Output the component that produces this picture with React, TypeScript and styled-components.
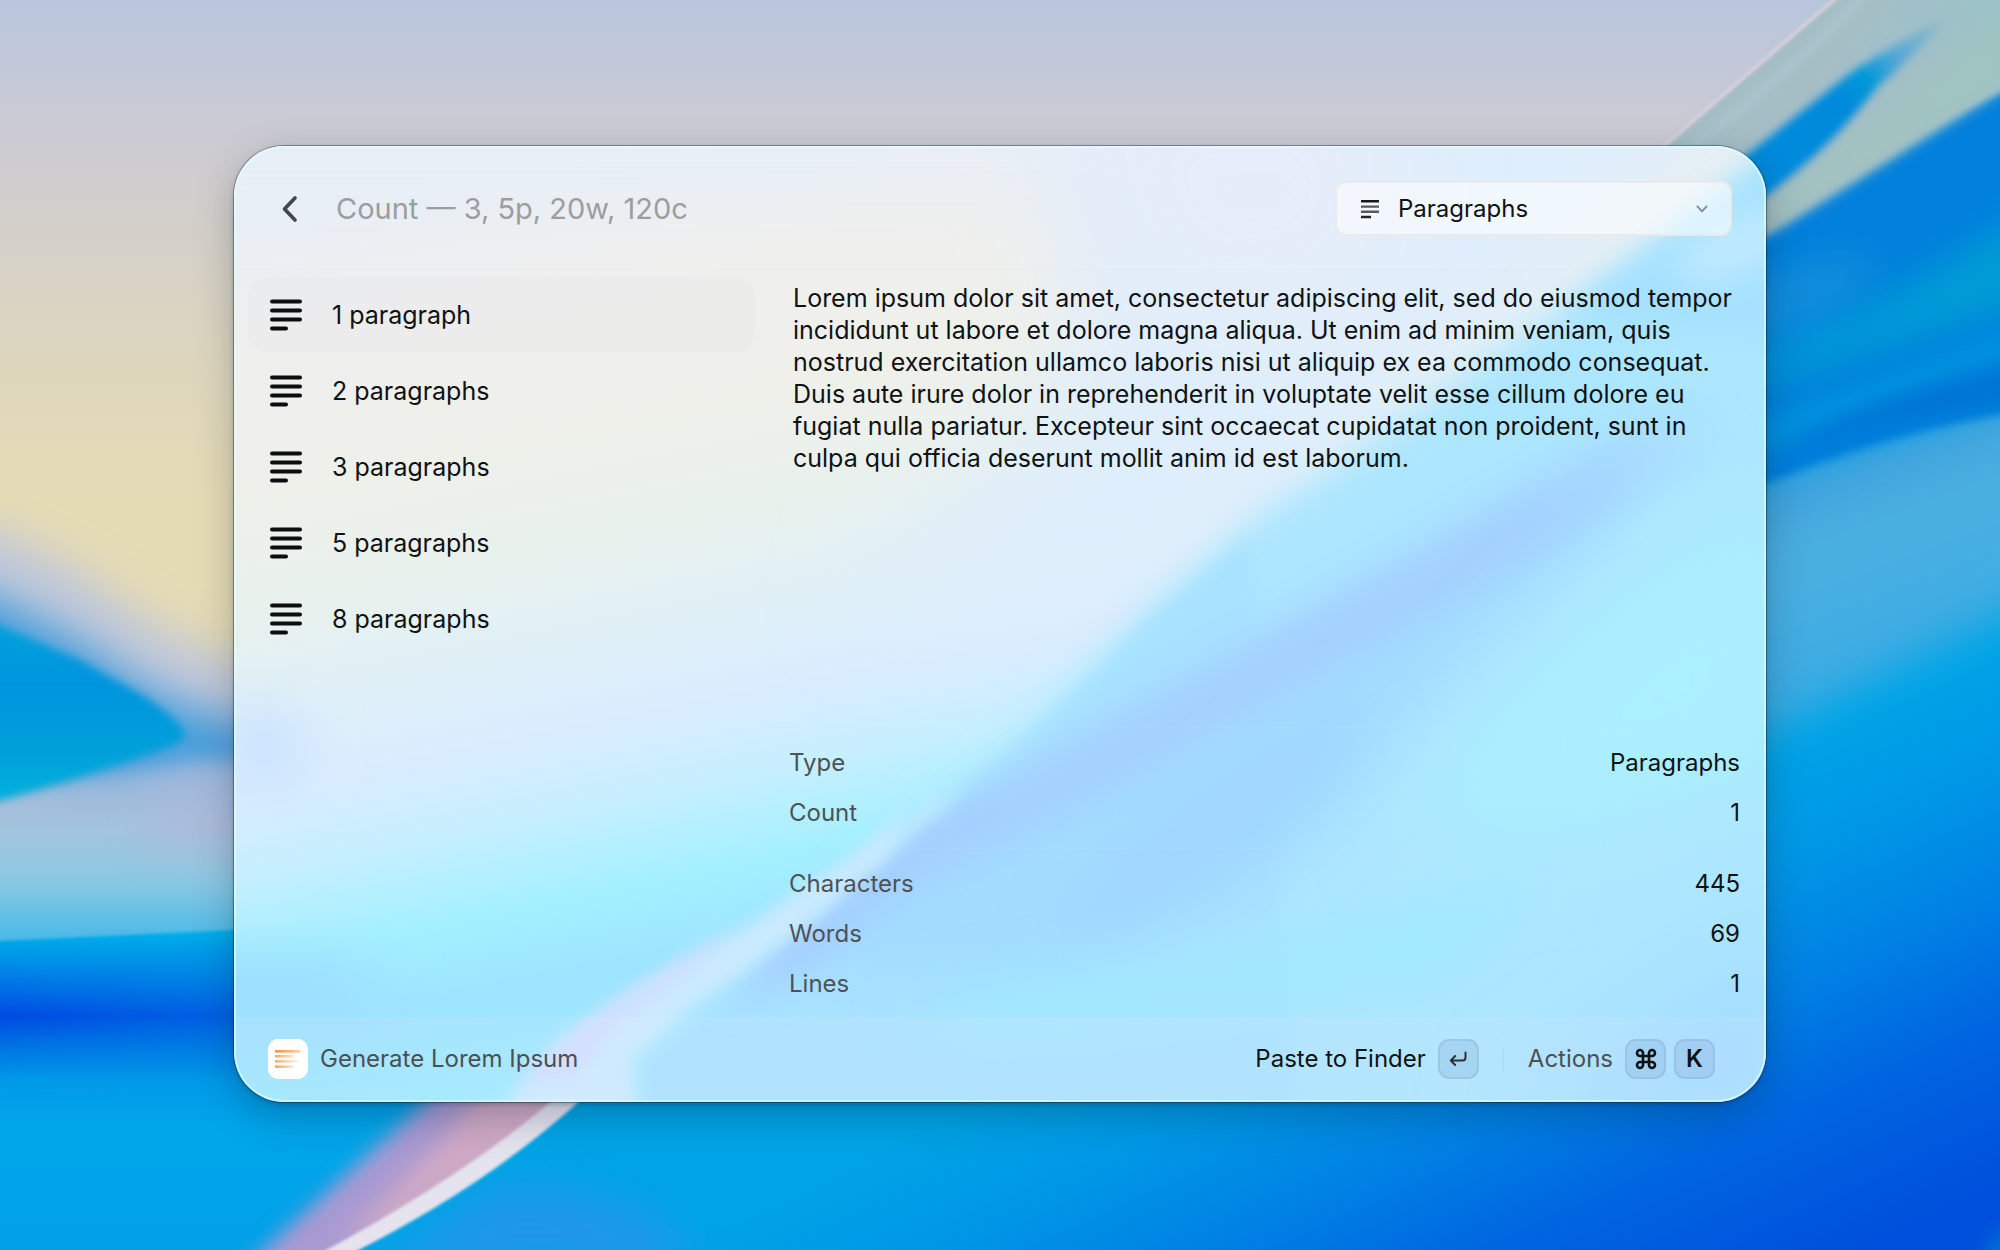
import React, { useState } from "react";
import styled, { createGlobalStyle } from "styled-components";
import { Command } from "lucide-react";

const GlobalStyle = createGlobalStyle`
  *, *::before, *::after { box-sizing: border-box; }
  html, body { margin: 0; padding: 0; }
  body {
    font-family: Inter, "Noto Sans", sans-serif;
    color: #101214;
    -webkit-font-smoothing: antialiased;
  }
  button, input, select { font: inherit; color: inherit; margin: 0; }
  ul, dl, dd, p { margin: 0; padding: 0; }
  ul { list-style: none; }
`;

const Desktop = styled.div`
  position: relative;
  isolation: isolate;
  overflow: hidden;
  display: flex;
  min-height: 100vh;
  padding: clamp(24px, 12vh, 146px) clamp(24px, 12vw, 234px) clamp(24px, 12vh, 148px);
  background: #0090e4;
`;

const Backdrop = styled.svg`
  position: absolute;
  inset: 0;
  z-index: -1;
  width: 100%;
  height: 100%;
`;

const Window = styled.main`
  position: relative;
  isolation: isolate;
  overflow: hidden;
  flex: 1;
  min-width: 0;
  display: flex;
  flex-direction: column;
  border-radius: 50px;
`;

const WindowShadow = styled.div`
  flex: 1;
  min-width: 0;
  display: flex;
  border-radius: 50px;
  box-shadow: 0 0 0 1px rgba(0, 20, 40, 0.34), 0 2px 5px rgba(0, 20, 40, 0.25),
    0 14px 40px rgba(0, 20, 40, 0.26);
`;

const Rim = styled.div`
  position: absolute;
  inset: 0;
  pointer-events: none;
  border-radius: 50px;
  box-shadow: inset 0 0 0 2px rgba(225, 255, 255, 0.62);
`;

const Header = styled.header`
  display: flex;
  align-items: center;
  height: 124px;
  padding: 2px 34px 0 36px;
  border-bottom: 1px solid rgba(120, 140, 160, 0.03);
`;

const BackButton = styled.button`
  display: grid;
  place-items: center;
  width: 40px;
  height: 48px;
  padding: 0;
  border: 0;
  background: none;
  color: #444648;
`;

const SearchInput = styled.input`
  flex: 1;
  min-width: 0;
  height: 48px;
  margin-left: 26px;
  padding: 0;
  border: 0;
  outline: 0;
  background: none;
  font-size: 29px;
  &::placeholder {
    color: #9c9d9f;
    opacity: 1;
  }
`;

const KindPicker = styled.label`
  display: grid;
  grid-template-columns: 24px 20px 1fr 12px 22px;
  align-items: center;
  width: 397px;
  height: 55px;
  border: 2px solid rgba(236, 230, 230, 0.85);
  border-radius: 11px;
  background: rgba(255, 255, 255, 0.56);
  & > svg {
    grid-row: 1;
    pointer-events: none;
  }
  & > svg:first-child { grid-column: 2; }
  & > svg:last-child { grid-column: 4; }
`;

const KindSelect = styled.select`
  grid-row: 1;
  grid-column: 1 / -1;
  height: 51px;
  padding: 0 48px 0 61px;
  border: 0;
  outline: 0;
  appearance: none;
  background: transparent;
  font-size: 24px;
`;

const Body = styled.div`
  flex: 1;
  display: grid;
  grid-template-columns: 532fr 1000fr;
  min-height: 0;
`;

const ResultList = styled.ul`
  padding: 7px 11px 7px 14px;
`;

const ResultRow = styled.button<{ $selected: boolean }>`
  display: flex;
  align-items: center;
  gap: 30px;
  width: 100%;
  height: 76px;
  padding: 0 22px;
  border: 0;
  border-radius: 20px;
  text-align: left;
  font-size: 25px;
  background: ${(p) => (p.$selected ? "rgba(120, 100, 130, 0.02)" : "transparent")};
`;

const Detail = styled.section`
  display: flex;
  flex-direction: column;
  justify-content: space-between;
  min-width: 0;
`;

const Preview = styled.p`
  padding: 12px 18px 0 27px;
  font-size: 25px;
  line-height: 32px;
`;

const Facts = styled.div`
  padding: 10px 26px 8px 23px;
  border-top: 1px solid rgba(200, 225, 255, 0.14);
`;

const FactGroup = styled.dl`
  & + & {
    margin-top: 10px;
    padding-top: 10px;
    border-top: 1px solid rgba(200, 220, 255, 0.2);
  }
`;

const Fact = styled.div`
  display: flex;
  justify-content: space-between;
  font-size: 24px;
  line-height: 50px;
  dt { color: #4d5257; }
`;

const Footer = styled.footer`
  display: flex;
  align-items: center;
  justify-content: space-between;
  height: 85px;
  padding: 0 51px 2px 34px;
  background: rgba(255, 240, 255, 0.1);
  font-size: 24px;
`;

const Source = styled.div`
  display: flex;
  align-items: center;
  gap: 12px;
  color: #4c4f54;
`;

const SourceIcon = styled.span`
  display: grid;
  place-items: center;
  width: 40px;
  height: 40px;
  border-radius: 10px;
  background: #fff;
`;

const Actions = styled.div`
  display: flex;
  align-items: center;
`;

const Action = styled.button<{ $muted?: boolean }>`
  display: flex;
  align-items: center;
  gap: 8px;
  padding: 0;
  border: 0;
  background: none;
  color: ${(p) => (p.$muted ? "#4c4f54" : "#101214")};
`;

const ActionName = styled.span`
  margin-right: 4px;
`;

const Divider = styled.span`
  width: 1px;
  height: 24px;
  margin: 0 24px;
  background: rgba(90, 150, 210, 0.12);
`;

const KeyCap = styled.kbd`
  display: grid;
  place-items: center;
  width: 41px;
  height: 40px;
  border: 2px solid rgba(90, 130, 170, 0.16);
  border-radius: 11px;
  background: rgba(110, 145, 190, 0.2);
  color: #101214;
  font-family: inherit;
  font-size: 24px;
  font-weight: 600;
`;

const LinesIcon = () => (
  <svg width="32" height="32" viewBox="0 0 32 32" fill="none" stroke="#0c0d0f" strokeWidth="4" strokeLinecap="round" aria-hidden>
    <path d="M2 2.5h28M2 11.5h28M2 20.5h28M2 29.5h14" />
  </svg>
);

const SmallLinesIcon = () => (
  <svg width="18" height="20" viewBox="0 0 18 20" fill="none" strokeWidth="2.4" aria-hidden>
    <path d="M0 2.2h18" stroke="#15171a" />
    <path d="M0 7.6h18M0 12.8h18" stroke="#56595e" />
    <path d="M0 18h10" stroke="#222428" />
  </svg>
);

const AppGlyph = () => (
  <svg width="26" height="20" viewBox="0 0 26 20" aria-hidden>
    <defs>
      <linearGradient id="amber" x1="0" x2="26" y1="0" y2="0" gradientUnits="userSpaceOnUse">
        <stop offset="0" stopColor="#f89433" />
        <stop offset="1" stopColor="#fdd2a4" />
      </linearGradient>
      <linearGradient id="amberFade" x1="0" x2="26" y1="0" y2="0" gradientUnits="userSpaceOnUse">
        <stop offset="0" stopColor="#f9a557" />
        <stop offset="1" stopColor="#ffffff" />
      </linearGradient>
    </defs>
    <g>
      <rect x="0" y="1" width="25" height="2.6" fill="url(#amber)" />
      <rect x="0" y="6" width="19" height="2.4" fill="url(#amberFade)" />
      <rect x="0" y="11.2" width="25" height="2.4" fill="url(#amberFade)" />
      <rect x="0" y="16.4" width="18" height="2.6" fill="url(#amberFade)" />
    </g>
  </svg>
);

const Wallpaper = () => (
  <Backdrop viewBox="0 0 2000 1250" preserveAspectRatio="none" aria-hidden>
    <defs>
      <linearGradient id="sky" x1="0" y1="0" x2="0" y2="620" gradientUnits="userSpaceOnUse">
        <stop offset="0" stopColor="#b9c6dc" />
        <stop offset="0.15" stopColor="#c6c9d7" />
        <stop offset="0.26" stopColor="#cecccf" />
        <stop offset="0.4" stopColor="#d5d1c8" />
        <stop offset="0.6" stopColor="#dfd7bd" />
        <stop offset="0.8" stopColor="#e5dbb5" />
        <stop offset="1" stopColor="#e5dbb5" />
      </linearGradient>
      <linearGradient id="mist" x1="0" y1="760" x2="0" y2="945" gradientUnits="userSpaceOnUse">
        <stop offset="0" stopColor="#8fb0dc" />
        <stop offset="0.35" stopColor="#a6c3dc" />
        <stop offset="0.65" stopColor="#8cc8e2" />
        <stop offset="1" stopColor="#42b8e8" />
      </linearGradient>
      <linearGradient id="sea" x1="0" y1="930" x2="0" y2="1250" gradientUnits="userSpaceOnUse">
        <stop offset="0" stopColor="#00b0ea" />
        <stop offset="0.09" stopColor="#0094e8" />
        <stop offset="0.27" stopColor="#004ae2" />
        <stop offset="0.36" stopColor="#0070e4" />
        <stop offset="0.47" stopColor="#009ae8" />
        <stop offset="0.62" stopColor="#00a6ea" />
        <stop offset="1" stopColor="#00a0e8" />
      </linearGradient>
      <linearGradient id="seaFade" x1="0" y1="0" x2="420" y2="0" gradientUnits="userSpaceOnUse">
        <stop offset="0" stopColor="#0092e4" stopOpacity="0" />
        <stop offset="1" stopColor="#0092e4" stopOpacity="0.6" />
      </linearGradient>
      <linearGradient id="fin" x1="0" y1="620" x2="0" y2="805" gradientUnits="userSpaceOnUse">
        <stop offset="0" stopColor="#00a2da" />
        <stop offset="0.35" stopColor="#0094de" />
        <stop offset="0.7" stopColor="#00a0da" />
        <stop offset="1" stopColor="#00b2dc" />
      </linearGradient>
      <linearGradient id="deep" x1="1767" y1="747" x2="1974" y2="1207" gradientUnits="userSpaceOnUse">
        <stop offset="0" stopColor="#00a4e6" />
        <stop offset="0.21" stopColor="#0098e6" />
        <stop offset="0.46" stopColor="#0080e4" />
        <stop offset="0.68" stopColor="#0066e0" />
        <stop offset="1" stopColor="#004edc" />
      </linearGradient>
      <linearGradient id="haze" x1="1840" y1="440" x2="1930" y2="680" gradientUnits="userSpaceOnUse">
        <stop offset="0" stopColor="#3a9bdc" />
        <stop offset="0.35" stopColor="#4cb0e0" />
        <stop offset="1" stopColor="#38aae4" />
      </linearGradient>
      <linearGradient id="veil" x1="2000" y1="0" x2="1700" y2="220" gradientUnits="userSpaceOnUse">
        <stop offset="0" stopColor="#9cc2c8" />
        <stop offset="0.5" stopColor="#a5bec8" />
        <stop offset="1" stopColor="#a3b8c2" />
      </linearGradient>
      <linearGradient id="wedge" x1="1950" y1="20" x2="1850" y2="110" gradientUnits="userSpaceOnUse">
        <stop offset="0" stopColor="#6cb0cf" stopOpacity="0.2" />
        <stop offset="0.5" stopColor="#4fa6d6" />
        <stop offset="0.75" stopColor="#0098d8" />
        <stop offset="1" stopColor="#008adc" />
      </linearGradient>
      <filter id="b1" x="-20%" y="-20%" width="140%" height="140%"><feGaussianBlur stdDeviation="1.4" /></filter>
      <filter id="b4" x="-20%" y="-20%" width="140%" height="140%"><feGaussianBlur stdDeviation="4" /></filter>
      <filter id="b10" x="-30%" y="-30%" width="160%" height="160%"><feGaussianBlur stdDeviation="10" /></filter>
      <filter id="b22" x="-40%" y="-40%" width="180%" height="180%"><feGaussianBlur stdDeviation="20" /></filter>
    </defs>

    <rect width="2000" height="1250" fill="url(#sky)" />

    <path d="M-80 505 L0 530 L75 568 L150 622 L260 672 L420 750 V960 H-80Z" fill="#c1c8da" filter="url(#b22)" />
    <path d="M-80 566 L0 598 L75 638 L150 688 L230 722 L420 740 V790 H-80Z" fill="#479fdc" filter="url(#b22)" />
    <path d="M-60 812 Q110 784 190 762 L420 758 V970 H-60Z" fill="url(#mist)" filter="url(#b10)" />
    <path d="M150 790 L300 770 V850 L150 850Z" fill="#adb9da" opacity="0.7" filter="url(#b22)" />
    <path d="M-20 618 L80 660 L117 681 Q165 706 184 731 Q188 741 165 748 Q90 776 -20 806Z" fill="url(#fin)" filter="url(#b4)" />

    <path d="M-20 942 L700 908 V1270 H-20Z" fill="url(#sea)" filter="url(#b1)" />
    <rect y="950" width="700" height="130" fill="url(#seaFade)" filter="url(#b10)" />

    <path d="M566 1095 Q470 1182 335 1260 H2040 V240 H1700Z" fill="url(#deep)" />
    <path d="M220 1290 L450 1080 L620 1080 L360 1285Z" fill="#a99ad2" filter="url(#b10)" />
    <path d="M340 1240 Q430 1160 490 1080 L640 1080 L460 1215Z" fill="#cfa9c6" filter="url(#b10)" />
    <path d="M572 1100 Q478 1186 338 1260 H700 V1100Z" fill="url(#deep)" />
    <path d="M500 1185 Q420 1235 370 1270 H700 Q660 1185 500 1185Z" fill="#2b93ea" opacity="0.75" filter="url(#b22)" />
    <path d="M583 1098 Q480 1192 330 1264 L300 1264 Q460 1180 555 1098Z" fill="#e4e3ee" filter="url(#b1)" />

    <path d="M1680 500 L2060 380 V588 L1680 775Z" fill="url(#haze)" filter="url(#b22)" />
    <ellipse cx="2010" cy="1262" rx="26" ry="34" fill="#0078d4" opacity="0.8" filter="url(#b10)" />
    <path d="M1700 230 L2040 70 V408 Q1880 430 1700 512Z" fill="#007fdc" filter="url(#b4)" />
    <path d="M1700 370 Q1860 330 2060 190 V290 Q1900 350 1700 400Z" fill="#009dd6" filter="url(#b22)" />
    <path d="M1740 290 Q1840 240 1880 260 Q1860 310 1740 340Z" fill="#239ada" opacity="0.6" filter="url(#b22)" />
    <path d="M1700 440 L2040 318 V346 L1700 476Z" fill="#0092de" filter="url(#b10)" />
    <path d="M1800 440 Q1900 385 2060 362 V394 Q1900 412 1800 450Z" fill="#0074d4" filter="url(#b10)" />

    <path d="M1842 -6 L1660 152 L1720 280 L1766 236 L2020 78 V-6Z" fill="url(#veil)" filter="url(#b4)" />
    <path d="M1842 -6 L1664 150 L1740 170 L1900 -6Z" fill="#a5bec6" filter="url(#b1)" />
    <path d="M1837 -3 L1661 148" stroke="#d6d0da" strokeWidth="4" fill="none" filter="url(#b1)" />
    <path d="M1862 -2 Q1770 90 1690 148" stroke="#b0c8d2" strokeWidth="5" fill="none" filter="url(#b4)" />
    <path d="M2010 10 L1860 130 L1766 205 L1766 232 L2010 82Z" fill="#a0c6bf" opacity="0.75" filter="url(#b10)" />
    <path d="M1950 16 Q1900 40 1852 72 L1740 160 L1755 204 Q1830 150 1878 86 Q1915 56 1950 16Z" fill="url(#wedge)" filter="url(#b4)" />
  </Backdrop>
);

const Glass = () => (
  <Backdrop viewBox="234 146 1532 956" preserveAspectRatio="none" aria-hidden>
    <defs>
      <linearGradient id="pane" x1="600" y1="146" x2="784" y2="1065" gradientUnits="userSpaceOnUse">
        <stop offset="0" stopColor="#e9eff6" />
        <stop offset="0.12" stopColor="#efefef" />
        <stop offset="0.29" stopColor="#eff0ea" />
        <stop offset="0.42" stopColor="#e8f1ed" />
        <stop offset="0.53" stopColor="#dff0f9" />
        <stop offset="0.6" stopColor="#daecfe" />
        <stop offset="0.69" stopColor="#c6efff" />
        <stop offset="0.78" stopColor="#a4f0ff" />
        <stop offset="0.87" stopColor="#9de4ff" />
        <stop offset="1" stopColor="#9eecff" />
      </linearGradient>
      <linearGradient id="ribbon" x1="1720" y1="400" x2="1500" y2="520" gradientUnits="userSpaceOnUse">
        <stop offset="0" stopColor="#a4d0ff" stopOpacity="0" />
        <stop offset="1" stopColor="#a4d0ff" />
      </linearGradient>
      <filter id="g8" filterUnits="userSpaceOnUse" x="0" y="0" width="2000" height="1250"><feGaussianBlur stdDeviation="8" /></filter>
      <filter id="g16" filterUnits="userSpaceOnUse" x="0" y="0" width="2000" height="1250"><feGaussianBlur stdDeviation="16" /></filter>
      <filter id="g28" filterUnits="userSpaceOnUse" x="0" y="0" width="2000" height="1250"><feGaussianBlur stdDeviation="28" /></filter>
      <filter id="g50" filterUnits="userSpaceOnUse" x="0" y="-100" width="2100" height="1450"><feGaussianBlur stdDeviation="50" /></filter>
    </defs>
    <rect x="234" y="146" width="1532" height="956" fill="url(#pane)" />
    <path d="M180 90 H1200 V190 H180Z" fill="#e7eff8" opacity="0.7" filter="url(#g28)" />
    <path d="M1060 40 H1850 L1300 540 L1060 620 L860 600 L1080 380Z" fill="#dfeefc" filter="url(#g50)" />
    <path d="M1040 60 H1400 V300 L1150 340Z" fill="#e8edf9" opacity="0.7" filter="url(#g50)" />
    <ellipse cx="262" cy="745" rx="44" ry="40" fill="#c8e2ff" filter="url(#g28)" />
    <ellipse cx="240" cy="990" rx="150" ry="34" fill="#9cdcff" filter="url(#g28)" />

    <path d="M1800 130 L1660 240 L1500 352 L1346 460 L1249 522 L1152 605 L1033 725 L951 800 L891 858 L824 916 L749 974 L690 1015 L640 1060 L650 1140 H1850Z" fill="#ade6ff" filter="url(#g16)" />
    <path d="M1249 540 L1152 620 L1033 735 L951 808 L891 866 L824 924 L749 982 L690 1023 L640 1066 L650 1140 H1300Z" fill="#a9e2ff" filter="url(#g8)" />
    <path d="M1650 430 Q1500 500 1346 590 L1150 700 L940 830 L800 960 L1000 1000 Q1250 940 1400 740 L1600 540Z" fill="#a2dcff" filter="url(#g28)" />
    <path d="M1740 360 L1592 455 L1430 548 L1224 660 L1030 765 L915 832 L840 895 L720 1004 L800 980 L905 895 L1066 815 L1254 715 L1460 600 L1640 500 L1760 440Z" fill="url(#ribbon)" filter="url(#g16)" />
    <path d="M1000 790 L915 838 L840 898 L750 980 L820 945 L890 885 L1010 815Z" fill="#a4d0ff" filter="url(#g8)" />
    <ellipse cx="1210" cy="825" rx="190" ry="36" transform="rotate(-38 1210 825)" fill="#a1d5ff" filter="url(#g28)" />
    <path d="M1800 490 Q1640 560 1520 680 Q1400 800 1420 840 Q1560 860 1800 760Z" fill="#abf0ff" filter="url(#g50)" />
    <path d="M900 1000 L1250 950 L1560 870 L1450 980 L1000 1040Z" fill="#a1eaff" filter="url(#g28)" />
    <path d="M1500 1130 L1800 930 V1130Z" fill="#a3daff" filter="url(#g50)" />

    <path d="M480 1130 L560 1040 L645 982 L749 925 L860 850 L910 808 L885 856 L820 914 L745 972 L686 1013 L632 1060 L640 1130Z" fill="#cbeaff" filter="url(#g8)" />
    <path d="M960 790 L880 860 L820 900 L780 940 L850 880 L930 800Z" fill="#c4ecff" filter="url(#g8)" />
    <path d="M520 1080 L600 1010 L740 925 L700 965 L620 1020 L570 1080Z" fill="#d0dbff" opacity="0.8" filter="url(#g8)" />
    <path d="M1790 150 L1700 215 L1560 320 L1800 340Z" fill="#a5e1ff" filter="url(#g16)" />
    <ellipse cx="1740" cy="245" rx="70" ry="30" transform="rotate(-25 1740 245)" fill="#bde9ff" filter="url(#g16)" />
  </Backdrop>
);

const results = ["1 paragraph", "2 paragraphs", "3 paragraphs", "5 paragraphs", "8 paragraphs"];

const factGroups: [string, string][][] = [
  [["Type", "Paragraphs"], ["Count", "1"]],
  [["Characters", "445"], ["Words", "69"], ["Lines", "1"]],
];

const lorem =
  "Lorem ipsum dolor sit amet, consectetur adipiscing elit, sed do eiusmod tempor incididunt ut labore et dolore magna aliqua. Ut enim ad minim veniam, quis nostrud exercitation ullamco laboris nisi ut aliquip ex ea commodo consequat. Duis aute irure dolor in reprehenderit in voluptate velit esse cillum dolore eu fugiat nulla pariatur. Excepteur sint occaecat cupidatat non proident, sunt in culpa qui officia deserunt mollit anim id est laborum.";

export default function App() {
  const [selected, setSelected] = useState(0);
  return (
    <Desktop>
      <GlobalStyle />
      <Wallpaper />
      <WindowShadow>
        <Window>
          <Glass />
          <Header>
            <BackButton aria-label="Back">
              <svg width="18" height="28" viewBox="0 0 18 28" fill="none" stroke="currentColor" strokeWidth="3.7" strokeLinecap="round" strokeLinejoin="round" aria-hidden>
                <path d="M14 3 3.500 14 14 25" />
              </svg>
            </BackButton>
            <SearchInput aria-label="Count" placeholder="Count — 3, 5p, 20w, 120c" />
            <KindPicker>
              <SmallLinesIcon />
              <KindSelect aria-label="Kind" defaultValue="Paragraphs">
                <option>Paragraphs</option>
                <option>Words</option>
                <option>Characters</option>
              </KindSelect>
              <svg width="12" height="8" viewBox="0 0 12 8" fill="none" stroke="#858d97" strokeWidth="1.900" strokeLinecap="round" strokeLinejoin="round" aria-hidden>
                <path d="M1.400 1.400 6 6.400l4.600-5" />
              </svg>
            </KindPicker>
          </Header>
          <Body>
            <ResultList>
              {results.map((name, i) => (
                <li key={name}>
                  <ResultRow $selected={i === selected} onClick={() => setSelected(i)}>
                    <LinesIcon />
                    {name}
                  </ResultRow>
                </li>
              ))}
            </ResultList>
            <Detail>
              <Preview>{lorem}</Preview>
              <Facts>
                {factGroups.map((group) => (
                  <FactGroup key={group[0][0]}>
                    {group.map(([name, value]) => (
                      <Fact key={name}>
                        <dt>{name}</dt>
                        <dd>{value}</dd>
                      </Fact>
                    ))}
                  </FactGroup>
                ))}
              </Facts>
            </Detail>
          </Body>
          <Footer>
            <Source>
              <SourceIcon><AppGlyph /></SourceIcon>
              Generate Lorem Ipsum
            </Source>
            <Actions>
              <Action>
                <ActionName>Paste to Finder</ActionName>
                <KeyCap aria-label="Return">
                  <svg width="18" height="16" viewBox="0 0 18 16" fill="none" stroke="#2c3238" strokeWidth="2" strokeLinecap="round" strokeLinejoin="round" aria-hidden>
                    <path d="M16.500 1.500v5a3 3 0 0 1-3 3H2M6.200 5 1.800 9.500l4.400 4.500" />
                  </svg>
                </KeyCap>
              </Action>
              <Divider />
              <Action $muted>
                <ActionName>Actions</ActionName>
                <KeyCap aria-label="Command"><Command size={24} strokeWidth={2.6} /></KeyCap>
                <KeyCap>K</KeyCap>
              </Action>
            </Actions>
          </Footer>
          <Rim />
        </Window>
      </WindowShadow>
    </Desktop>
  );
}
